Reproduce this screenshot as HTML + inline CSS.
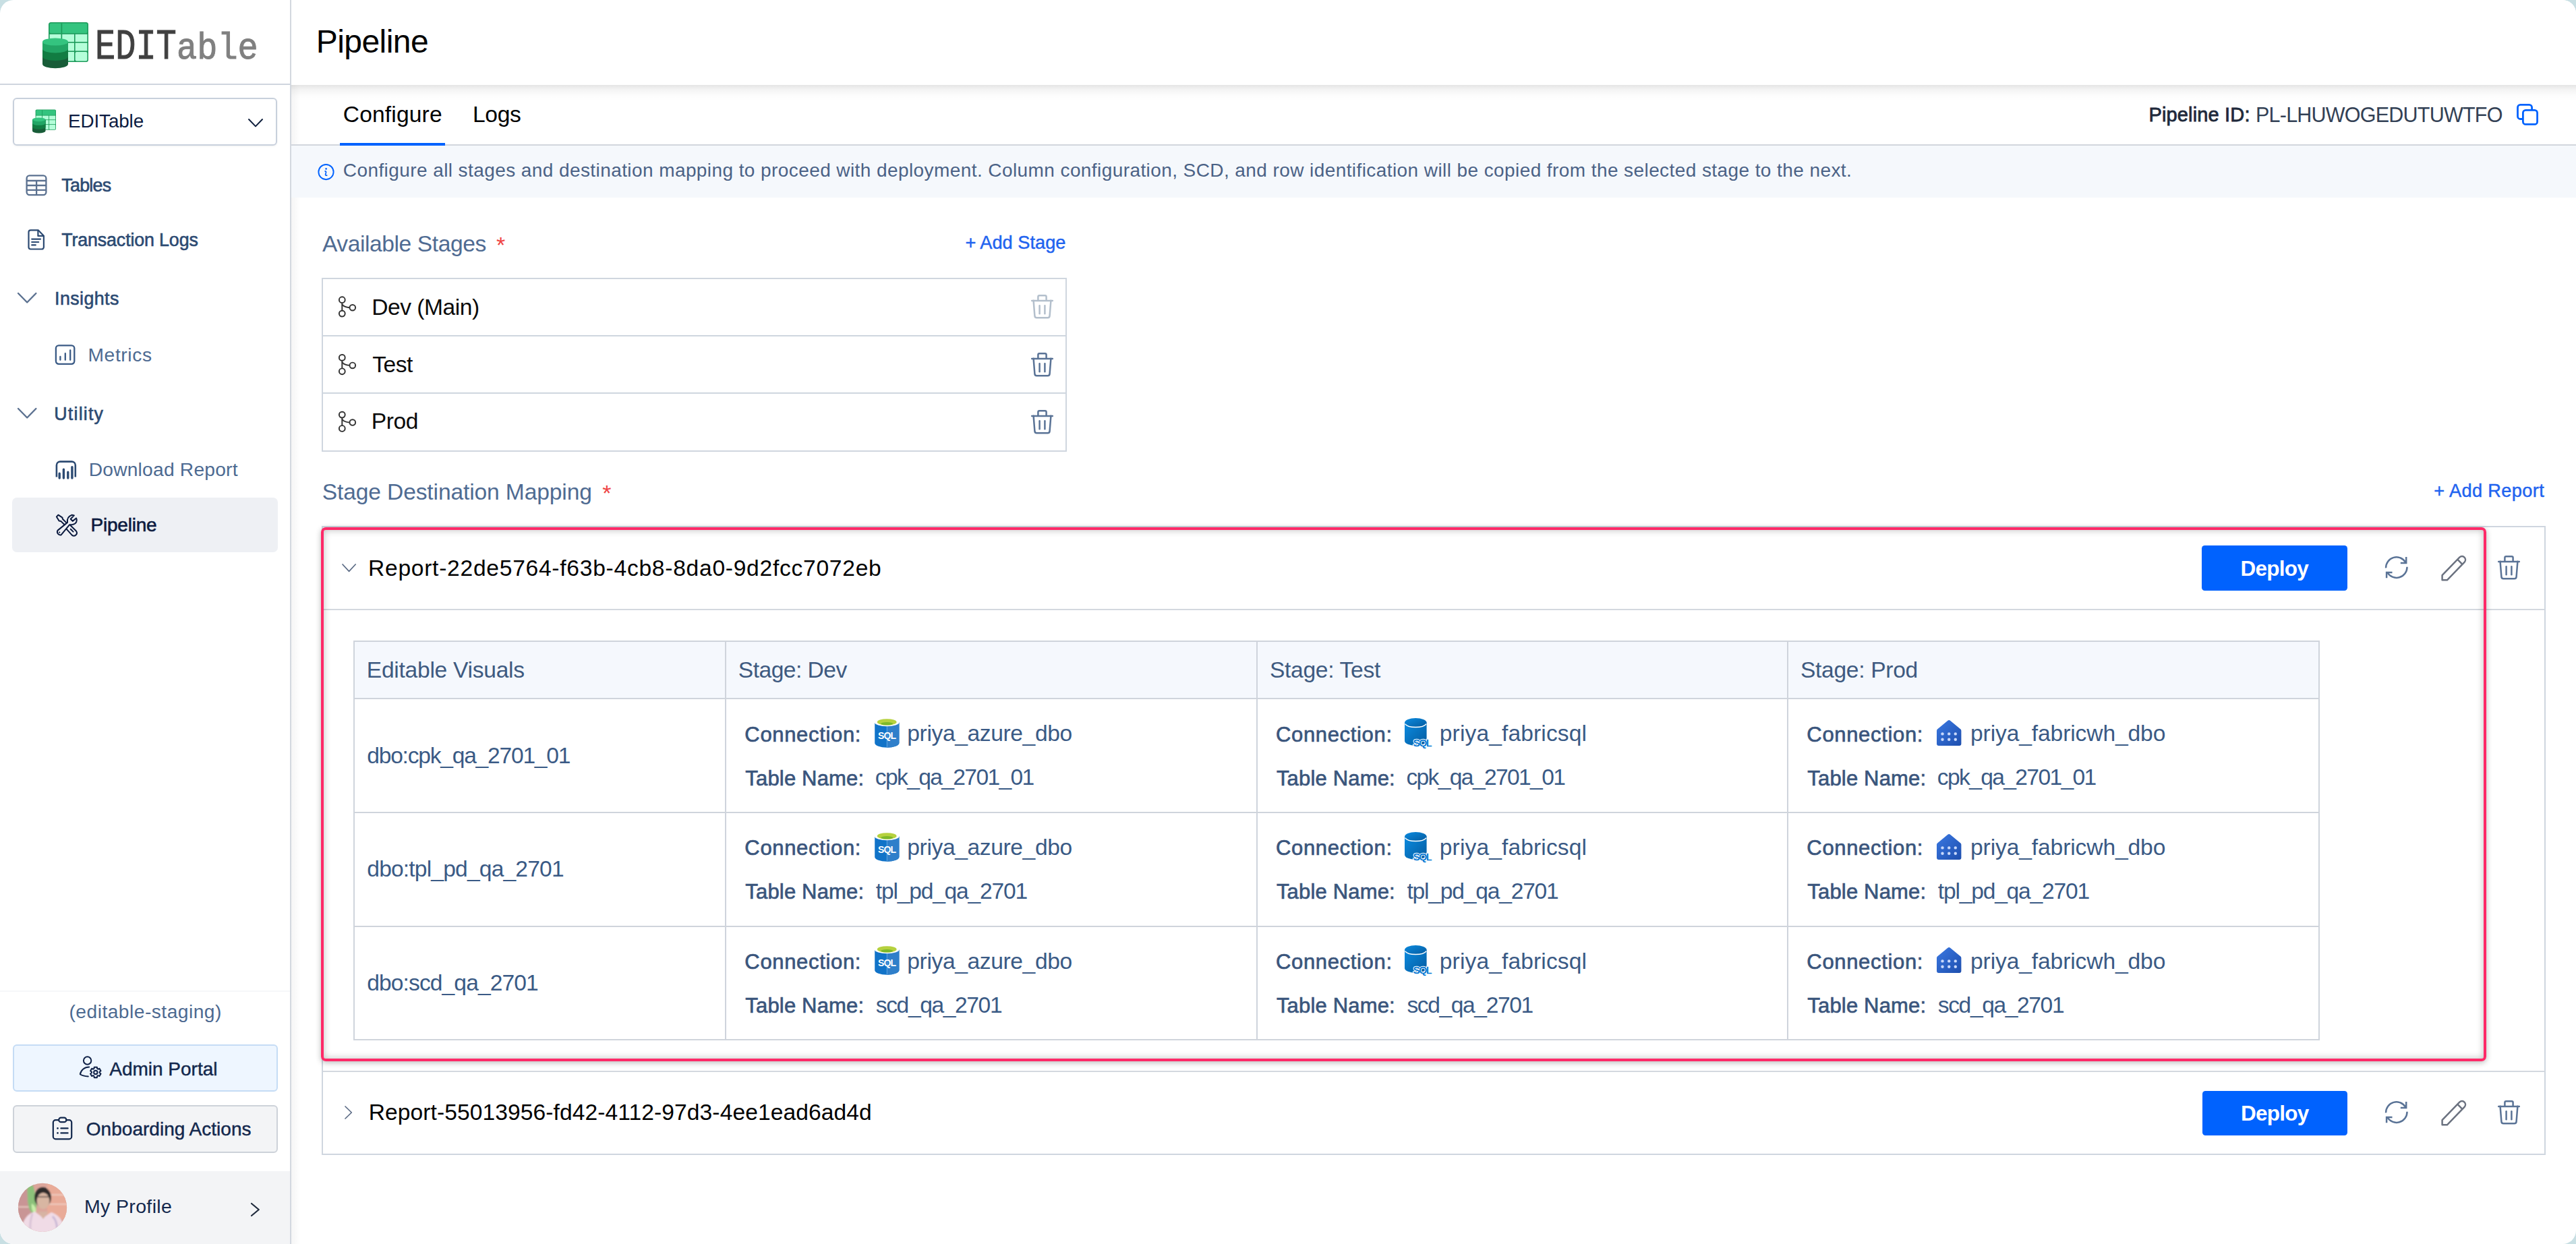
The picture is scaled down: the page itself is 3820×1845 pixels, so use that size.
<!DOCTYPE html>
<html><head><meta charset="utf-8"><title>Pipeline</title>
<style>
html,body{margin:0;padding:0;}
body{width:3820px;height:1845px;overflow:hidden;background:#c8dfe3;position:relative;font-family:"Liberation Sans",sans-serif;}
.win{position:absolute;left:0;top:0;width:3820px;height:1845px;background:#fff;border-radius:20px;overflow:hidden;}
.b{position:absolute;}
.t{position:absolute;white-space:nowrap;font-family:"Liberation Sans",sans-serif;z-index:4;}
.ic{position:absolute;overflow:visible;z-index:4;}
</style></head><body><div class="win">
<div class="b" style="left:430px;top:0px;width:2px;height:1845px;background:#d3d8df"></div>
<div class="b" style="left:432px;top:0px;width:14px;height:1845px;background:linear-gradient(90deg,rgba(0,0,0,0.04),rgba(0,0,0,0))"></div>
<div class="b" style="left:0px;top:124px;width:430px;height:2px;background:#cfd5de"></div>
<svg class="ic" style="left:60px;top:30px;width:74px;height:74px;" viewBox="60 30 74 74"><g transform="translate(63 33) scale(1) translate(-63 -33)">
<rect x="72" y="33" width="59" height="59" rx="3.5" fill="#1c9a5a"/>
<rect x="73.6" y="34.6" width="55.8" height="14.6" rx="2" fill="#34c47f"/>
<rect x="73.6" y="50.8" width="16.9" height="11.2" fill="#b4fed9"/>
<rect x="92.2" y="50.8" width="17.8" height="11.2" fill="#b4fed9"/>
<rect x="111.6" y="50.8" width="17.8" height="11.2" fill="#b4fed9"/>
<rect x="73.6" y="63.6" width="16.9" height="11.8" fill="#b4fed9"/>
<rect x="92.2" y="63.6" width="17.8" height="11.8" fill="#b4fed9"/>
<rect x="111.6" y="63.6" width="17.8" height="11.8" fill="#b4fed9"/>
<rect x="73.6" y="77" width="16.9" height="13.4" rx="1" fill="#b4fed9"/>
<rect x="92.2" y="77" width="17.8" height="13.4" fill="#b4fed9"/>
<rect x="111.6" y="77" width="17.8" height="13.4" rx="2" fill="#b4fed9"/>
<rect x="90.6" y="34.6" width="1.6" height="15" fill="#1c9a5a"/>
<path d="M63 62 v33 a19 6.2 0 0 0 38 0 v-33 z" fill="#185c38"/>
<path d="M63 62 v22 a19 6 0 0 0 38 0 v-22 z" fill="#117c42"/>
<path d="M63 62 v10.5 a19 6 0 0 0 38 0 v-10.5 z" fill="#22a565"/>
<ellipse cx="82" cy="62" rx="19" ry="5.6" fill="#34c47f"/>
</g></svg>
<div class="b" style="left:18.5px;top:144.5px;width:392.3px;height:71.0px;border:2px solid #c8d0dc;border-radius:6px;box-sizing:border-box;box-shadow:0 1px 3px rgba(0,0,0,0.06)"></div>
<svg class="ic" style="left:46px;top:160px;width:40px;height:40px;" viewBox="46 160 40 40"><g transform="translate(48 162.4) scale(0.5147058823529411) translate(-63 -33)">
<rect x="72" y="33" width="59" height="59" rx="3.5" fill="#1c9a5a"/>
<rect x="73.6" y="34.6" width="55.8" height="14.6" rx="2" fill="#34c47f"/>
<rect x="73.6" y="50.8" width="16.9" height="11.2" fill="#b4fed9"/>
<rect x="92.2" y="50.8" width="17.8" height="11.2" fill="#b4fed9"/>
<rect x="111.6" y="50.8" width="17.8" height="11.2" fill="#b4fed9"/>
<rect x="73.6" y="63.6" width="16.9" height="11.8" fill="#b4fed9"/>
<rect x="92.2" y="63.6" width="17.8" height="11.8" fill="#b4fed9"/>
<rect x="111.6" y="63.6" width="17.8" height="11.8" fill="#b4fed9"/>
<rect x="73.6" y="77" width="16.9" height="13.4" rx="1" fill="#b4fed9"/>
<rect x="92.2" y="77" width="17.8" height="13.4" fill="#b4fed9"/>
<rect x="111.6" y="77" width="17.8" height="13.4" rx="2" fill="#b4fed9"/>
<rect x="90.6" y="34.6" width="1.6" height="15" fill="#1c9a5a"/>
<path d="M63 62 v33 a19 6.2 0 0 0 38 0 v-33 z" fill="#185c38"/>
<path d="M63 62 v22 a19 6 0 0 0 38 0 v-22 z" fill="#117c42"/>
<path d="M63 62 v10.5 a19 6 0 0 0 38 0 v-10.5 z" fill="#22a565"/>
<ellipse cx="82" cy="62" rx="19" ry="5.6" fill="#34c47f"/>
</g></svg>
<svg class="ic" style="left:365.6px;top:174.4px;width:26.0px;height:16.400000000000006px;" viewBox="365.6 174.4 26.0 16.400000000000006"><path d="M368.6 177.4 L378.6 187.8 L388.6 177.4" fill="none" stroke="#0f1f3d" stroke-width="2.0" stroke-linecap="round" stroke-linejoin="round"/></svg>
<svg class="ic" style="left:36px;top:257px;width:36px;height:36px;" viewBox="36 257 36 36"><g fill="none" stroke="#5b7190" stroke-width="2.3"><rect x="39.6" y="260.4" width="28.8" height="28.8" rx="4.2"/>
<path d="M39.6 268 H68.4 M39.6 275 H68.4 M39.6 281.8 H68.4 M54.1 268 V289.2"/></g></svg>
<svg class="ic" style="left:39px;top:338px;width:30px;height:35px;" viewBox="39 338 30 35"><g fill="none" stroke="#2c4a72" stroke-width="2.2" stroke-linejoin="round">
<path d="M45.5 341.3 H56.6 L64.9 349.8 V366.5 a3 3 0 0 1 -3 3 H45.5 a3 3 0 0 1 -3 -3 V344.3 a3 3 0 0 1 3 -3 Z"/>
<path d="M56.4 341.5 V349.9 H64.8"/><path d="M47.2 354.6 H60 M47.2 359 H57.2 M47.2 363.4 H52.8" stroke-linecap="round"/></g></svg>
<svg class="ic" style="left:24.2px;top:431.5px;width:32.400000000000006px;height:19.5px;" viewBox="24.2 431.5 32.400000000000006 19.5"><path d="M27.2 434.5 L40.4 448 L53.6 434.5" fill="none" stroke="#5b7190" stroke-width="2.4" stroke-linecap="round" stroke-linejoin="round"/></svg>
<svg class="ic" style="left:80px;top:509px;width:34px;height:34px;" viewBox="80 509 34 34"><g fill="none" stroke="#3a5a85" stroke-width="2.3" stroke-linecap="round"><rect x="82.9" y="512.4" width="27.4" height="27.4" rx="4.2"/>
<path d="M89.4 529 V533.8 M96.8 524.2 V533.8 M104.2 519.3 V533.8"/></g></svg>
<svg class="ic" style="left:24.2px;top:602.5px;width:32.400000000000006px;height:19.5px;" viewBox="24.2 602.5 32.400000000000006 19.5"><path d="M27.2 605.5 L40.4 619 L53.6 605.5" fill="none" stroke="#5b7190" stroke-width="2.4" stroke-linecap="round" stroke-linejoin="round"/></svg>
<svg class="ic" style="left:80px;top:681px;width:36px;height:32px;" viewBox="80 681 36 32"><g fill="none" stroke="#2c4a72" stroke-linecap="round">
<path d="M83.9 707.5 V690 a5.4 5.4 0 0 1 5.4 -5.4 H106.4 a5.4 5.4 0 0 1 5.4 5.4 V707.5" stroke-width="2.6" stroke-linecap="butt"/>
<path d="M88.2 702.2 V709 M94.4 696.2 V709 M100.8 700.2 V709 M106.9 692.6 V709" stroke-width="3.4"/></g></svg>
<div class="b" style="left:18px;top:738px;width:394px;height:80.5px;background:#eef0f4;border-radius:7px"></div>
<svg class="ic" style="left:81px;top:762px;width:36px;height:35px;" viewBox="81 762 36 35"><g fill="none" stroke="#0b1a3e" stroke-width="2.0" stroke-linejoin="round" stroke-linecap="round">
<path d="M90.2 772.9 L87.6 772.4 L83.9 766.4 L86.4 763.7 L92.4 767.6 L92.9 769.7 L98.3 775.1 M90.2 772.9 L95.7 778.3"/>
<path d="M104.3 779 L113.1 787.7 A4.4 4.4 0 0 1 106.7 793.6 L98.6 784.7"/>
<path d="M104.7 784.7 L108.6 788.6"/>
<path d="M100 774.9 C99.3 770 101.5 765.5 106.7 763.7 L109.9 764.4 L104.7 769.7 L107.7 772.9 L113.1 768.5 C114.9 772 113.6 776.8 107.7 777.9 L103 778.3 L90.8 793.2 A4.5 4.5 0 0 1 85.6 786.6 Z"/>
</g><circle cx="88.2" cy="789.6" r="1.1" fill="#0b1a3e"/></svg>
<div class="b" style="left:0px;top:1469px;width:430px;height:2px;background:#f6f7f9"></div>
<div class="b" style="left:18.5px;top:1548.5px;width:393.0px;height:70.5px;background:#eef6ff;border:2px solid #c5dcf5;border-radius:6px;box-sizing:border-box"></div>
<svg class="ic" style="left:115px;top:1564px;width:38px;height:38px;" viewBox="115 1564 38 38"><g fill="none" stroke="#0f2147" stroke-width="2" stroke-linecap="round" stroke-linejoin="round">
<circle cx="129.6" cy="1573" r="5.7"/><path d="M132.2 1582.6 C125.5 1582.6 120 1587 118.8 1593.3 C122 1595.6 126.5 1596.3 130.8 1596.5"/>
<path d="M139.39 1585.01 L139.74 1582.67 L143.86 1582.67 L144.21 1585.01 L145.26 1585.62 L147.47 1584.75 L149.52 1588.32 L147.67 1589.79 L147.67 1591.01 L149.52 1592.48 L147.47 1596.05 L145.26 1595.18 L144.21 1595.79 L143.86 1598.13 L139.74 1598.13 L139.39 1595.79 L138.34 1595.18 L136.13 1596.05 L134.08 1592.48 L135.93 1591.01 L135.93 1589.79 L134.08 1588.32 L136.13 1584.75 L138.34 1585.62 Z"/><circle cx="141.8" cy="1590.4" r="2.7"/></g></svg>
<div class="b" style="left:18.5px;top:1638.5px;width:393.0px;height:71.0px;background:#f3f4f6;border:2px solid #cdd2d9;border-radius:6px;box-sizing:border-box"></div>
<svg class="ic" style="left:75px;top:1654px;width:35px;height:39px;" viewBox="75 1654 35 39"><g fill="none" stroke="#13284d" stroke-width="2.2" stroke-linecap="round">
<path d="M86.6 1661.2 H82.4 a3.6 3.6 0 0 0 -3.6 3.6 V1685.8 a3.6 3.6 0 0 0 3.6 3.6 H102.6 a3.6 3.6 0 0 0 3.6 -3.6 V1664.8 a3.6 3.6 0 0 0 -3.6 -3.6 H98.4"/>
<rect x="87.2" y="1657.6" width="11.2" height="6.6" rx="3.3"/>
<path d="M90.4 1673.4 H100.6 M90.4 1680.4 H100.6"/></g>
<g fill="#13284d"><circle cx="85.5" cy="1673.4" r="1.3"/><circle cx="85.5" cy="1680.4" r="1.3"/></g></svg>
<div class="b" style="left:0px;top:1737px;width:430px;height:108px;background:#f3f4f6"></div>
<svg class="ic" style="left:26px;top:1754px;width:74px;height:74px;" viewBox="26 1754 74 74"><defs><clipPath id="av"><circle cx="63" cy="1790.9" r="36.1"/></clipPath>
<filter id="avb" x="-20%" y="-20%" width="140%" height="140%"><feGaussianBlur stdDeviation="1.3"/></filter></defs>
<g clip-path="url(#av)"><rect x="20" y="1748" width="86" height="86" fill="#dba59b"/>
<g filter="url(#avb)">
<rect x="20" y="1748" width="30" height="86" fill="#c99595"/>
<rect x="70" y="1748" width="36" height="60" fill="#e9ab98"/>
<path d="M72 1772 H104 M72 1786 H104 M22 1790 H44" stroke="#f0d6cc" stroke-width="1.6"/>
<path d="M40 1750 C46 1752 52 1760 52 1775 C54 1786 56 1792 50 1800 C44 1798 42 1790 41 1780 Z" fill="#8cc17a"/>
<path d="M47 1785 C52 1788 56 1794 52 1800 C48 1798 46 1792 47 1785 Z" fill="#c9efaa"/>
<ellipse cx="63.5" cy="1776" rx="12.5" ry="15" fill="#2e2a2c"/>
<ellipse cx="64" cy="1781" rx="9.5" ry="12" fill="#d8b6a2"/>
<path d="M55 1775 H73" stroke="#5a4b48" stroke-width="1.6"/>
<path d="M30 1834 C32 1810 40 1800 52 1797 L64 1806 L76 1798 C88 1802 96 1812 98 1834 Z" fill="#f0dbe6"/>
<path d="M56 1797 L64 1808 L72 1797 Z" fill="#d7b4a3"/>
<path d="M78 1804 C84 1810 86 1820 84 1834" stroke="#c9b8d6" stroke-width="3" fill="none"/>
<path d="M48 1800 C44 1812 44 1822 46 1834" stroke="#d9c3d6" stroke-width="3" fill="none"/>
</g></g></svg>
<svg class="ic" style="left:370.2px;top:1782.2px;width:16.80000000000001px;height:24.0px;" viewBox="370.2 1782.2 16.80000000000001 24.0"><path d="M373.2 1785.2 L384 1794.2 L373.2 1803.2" fill="none" stroke="#1e293b" stroke-width="2.2" stroke-linecap="round" stroke-linejoin="round"/></svg>
<div class="b" style="left:432px;top:0px;width:3388px;height:126px;background:#fff;z-index:2"></div>
<div class="b" style="left:432px;top:126px;width:3388px;height:24px;background:linear-gradient(180deg,rgba(0,0,0,0.10),rgba(0,0,0,0.045) 30%,rgba(0,0,0,0.012) 65%,rgba(0,0,0,0));z-index:2"></div>
<div class="b" style="left:432px;top:214px;width:3388px;height:2px;background:#d2d6dd"></div>
<div class="b" style="left:504px;top:212px;width:156px;height:4px;background:#0062fe"></div>
<svg class="ic" style="left:3729px;top:151px;width:38px;height:37px;" viewBox="3729 151 38 37"><g fill="none" stroke="#0062fe" stroke-width="2.8"><path d="M3741 176.5 H3737.5 a4 4 0 0 1 -4 -4 V159.4 a4 4 0 0 1 4 -4 H3750.6 a4 4 0 0 1 4 4 V163"/>
<rect x="3741.4" y="163.4" width="21.2" height="21" rx="4" fill="#fff"/></g></svg>
<div class="b" style="left:432px;top:216px;width:3388px;height:77px;background:#f5f8fc"></div>
<svg class="ic" style="left:469px;top:241px;width:28px;height:28px;" viewBox="469 241 28 28"><circle cx="483.5" cy="255.1" r="11.1" fill="none" stroke="#0062fe" stroke-width="1.9"/><circle cx="483.6" cy="250.4" r="1.3" fill="#0062fe"/><path d="M482.1 253.9 Q484 254 483.3 256.4 L482.7 258.4 Q482.3 260.5 484.7 260.2" fill="none" stroke="#0062fe" stroke-width="1.7" stroke-linecap="round"/></svg>
<div class="t" style="left:736px;top:345.7px;font-size:34px;line-height:34px;color:#ef4444">*</div>
<div class="b" style="left:477px;top:412px;width:1105px;height:257.5px;border:2px solid #cfd6df;box-sizing:border-box"></div>
<div class="b" style="left:479px;top:497px;width:1101px;height:2px;background:#cfd6df"></div>
<div class="b" style="left:479px;top:582px;width:1101px;height:2px;background:#cfd6df"></div>
<svg class="ic" style="left:499px;top:437px;width:32px;height:36px;" viewBox="499 437 32 36"><g fill="none" stroke="#333" stroke-width="1.95">
<circle cx="507.3" cy="444.7" r="4.4"/><circle cx="507.3" cy="465.1" r="4.4"/><circle cx="522.8" cy="456.2" r="4.3"/>
<path d="M507.3 448.90000000000003 V460.8"/><path d="M507.3 451.3 C509 454.3 512 455.8 518.6 456.2"/></g></svg>
<svg class="ic" style="left:499px;top:523px;width:32px;height:36px;" viewBox="499 523 32 36"><g fill="none" stroke="#333" stroke-width="1.95">
<circle cx="507.3" cy="530.4" r="4.4"/><circle cx="507.3" cy="550.8" r="4.4"/><circle cx="522.8" cy="541.9" r="4.3"/>
<path d="M507.3 534.6 V546.5"/><path d="M507.3 537 C509 540 512 541.5 518.6 541.9"/></g></svg>
<svg class="ic" style="left:499px;top:607px;width:32px;height:36px;" viewBox="499 607 32 36"><g fill="none" stroke="#333" stroke-width="1.95">
<circle cx="507.3" cy="615.1" r="4.4"/><circle cx="507.3" cy="635.5" r="4.4"/><circle cx="522.8" cy="626.6" r="4.3"/>
<path d="M507.3 619.3000000000001 V631.2"/><path d="M507.3 621.7 C509 624.7 512 626.2 518.6 626.6"/></g></svg>
<svg class="ic" style="left:1527.2px;top:435.2px;width:38.0px;height:40.0px;" viewBox="1527.2 435.2 38.0 40.0"><g fill="none" stroke="#b3bfcc" stroke-width="2.5" stroke-linecap="round" stroke-linejoin="round" transform="translate(1529.2 437.2)">
<path d="M1.2 9 H31.8"/><path d="M10.4 8 V3.2 a2 2 0 0 1 2 -2 H20.6 a2 2 0 0 1 2 2 V8"/>
<path d="M3.6 8.8 L5.4 31.4 a3 3 0 0 0 3 2.9 H24.6 a3 3 0 0 0 3 -2.9 L29.4 8.8"/>
<path d="M12.6 16.3 V28.2"/><path d="M20.4 16.3 V28.2"/></g></svg>
<svg class="ic" style="left:1527.2px;top:520.9px;width:38.0px;height:40.0px;" viewBox="1527.2 520.9 38.0 40.0"><g fill="none" stroke="#5a7396" stroke-width="2.5" stroke-linecap="round" stroke-linejoin="round" transform="translate(1529.2 522.9)">
<path d="M1.2 9 H31.8"/><path d="M10.4 8 V3.2 a2 2 0 0 1 2 -2 H20.6 a2 2 0 0 1 2 2 V8"/>
<path d="M3.6 8.8 L5.4 31.4 a3 3 0 0 0 3 2.9 H24.6 a3 3 0 0 0 3 -2.9 L29.4 8.8"/>
<path d="M12.6 16.3 V28.2"/><path d="M20.4 16.3 V28.2"/></g></svg>
<svg class="ic" style="left:1527.2px;top:605.6px;width:38.0px;height:40.0px;" viewBox="1527.2 605.6 38.0 40.0"><g fill="none" stroke="#5a7396" stroke-width="2.5" stroke-linecap="round" stroke-linejoin="round" transform="translate(1529.2 607.6)">
<path d="M1.2 9 H31.8"/><path d="M10.4 8 V3.2 a2 2 0 0 1 2 -2 H20.6 a2 2 0 0 1 2 2 V8"/>
<path d="M3.6 8.8 L5.4 31.4 a3 3 0 0 0 3 2.9 H24.6 a3 3 0 0 0 3 -2.9 L29.4 8.8"/>
<path d="M12.6 16.3 V28.2"/><path d="M20.4 16.3 V28.2"/></g></svg>
<div class="t" style="left:893.2px;top:714.3px;font-size:34px;line-height:34px;color:#ef4444">*</div>
<div class="b" style="left:477px;top:780px;width:3298px;height:933px;border:2px solid #cfd6df;box-sizing:border-box"></div>
<div class="b" style="left:479px;top:903px;width:3294px;height:2px;background:#d3d8df"></div>
<div class="b" style="left:479px;top:1588px;width:3294px;height:2px;background:#d3d8df"></div>
<div class="b" style="left:3265px;top:809px;width:216px;height:67px;background:#0062fe;border-radius:4.5px"></div>
<div class="b" style="left:3265.5px;top:1617.5px;width:215.0px;height:66.5px;background:#0062fe;border-radius:4.5px"></div>
<svg class="ic" style="left:3535.2px;top:823.2px;width:39.0px;height:39.0px;" viewBox="3535.2 823.2 39.0 39.0"><g fill="none" stroke="#5a7396" stroke-width="2.5" stroke-linecap="butt" transform="translate(3537.2 825.2)">
<path d="M1.1 17.4 A15.7 15.7 0 0 1 30.4 9.2"/><path d="M31.2 1 V10 H22.8"/>
<path d="M32.5 15.8 A15.7 15.7 0 0 1 3.2 24"/><path d="M2.1 32.3 V24 H10.5"/></g></svg>
<svg class="ic" style="left:3618.7px;top:821.8px;width:41.0px;height:41.0px;" viewBox="3618.7 821.8 41.0 41.0"><g fill="none" stroke="#6b7280" stroke-width="2.5" stroke-linejoin="round" transform="translate(3620.7 823.8)">
<path d="M0.6 29.1 L26.5 2.4 A5.1 5.1 0 0 1 33.7 9.6 L7.9 36.3 H0.6 Z"/><path d="M23.2 5.7 L30.4 12.9"/></g></svg>
<svg class="ic" style="left:3702.2px;top:821.8px;width:38.0px;height:40.0px;" viewBox="3702.2 821.8 38.0 40.0"><g fill="none" stroke="#5a7396" stroke-width="2.5" stroke-linecap="round" stroke-linejoin="round" transform="translate(3704.2 823.8)">
<path d="M1.2 9 H31.8"/><path d="M10.4 8 V3.2 a2 2 0 0 1 2 -2 H20.6 a2 2 0 0 1 2 2 V8"/>
<path d="M3.6 8.8 L5.4 31.4 a3 3 0 0 0 3 2.9 H24.6 a3 3 0 0 0 3 -2.9 L29.4 8.8"/>
<path d="M12.6 16.3 V28.2"/><path d="M20.4 16.3 V28.2"/></g></svg>
<svg class="ic" style="left:3535.2px;top:1631.2px;width:39.0px;height:39.0px;" viewBox="3535.2 1631.2 39.0 39.0"><g fill="none" stroke="#5a7396" stroke-width="2.5" stroke-linecap="butt" transform="translate(3537.2 1633.2)">
<path d="M1.1 17.4 A15.7 15.7 0 0 1 30.4 9.2"/><path d="M31.2 1 V10 H22.8"/>
<path d="M32.5 15.8 A15.7 15.7 0 0 1 3.2 24"/><path d="M2.1 32.3 V24 H10.5"/></g></svg>
<svg class="ic" style="left:3618.7px;top:1629.8px;width:41.0px;height:41.0px;" viewBox="3618.7 1629.8 41.0 41.0"><g fill="none" stroke="#6b7280" stroke-width="2.5" stroke-linejoin="round" transform="translate(3620.7 1631.8)">
<path d="M0.6 29.1 L26.5 2.4 A5.1 5.1 0 0 1 33.7 9.6 L7.9 36.3 H0.6 Z"/><path d="M23.2 5.7 L30.4 12.9"/></g></svg>
<svg class="ic" style="left:3702.2px;top:1629.8px;width:38.0px;height:40.0px;" viewBox="3702.2 1629.8 38.0 40.0"><g fill="none" stroke="#5a7396" stroke-width="2.5" stroke-linecap="round" stroke-linejoin="round" transform="translate(3704.2 1631.8)">
<path d="M1.2 9 H31.8"/><path d="M10.4 8 V3.2 a2 2 0 0 1 2 -2 H20.6 a2 2 0 0 1 2 2 V8"/>
<path d="M3.6 8.8 L5.4 31.4 a3 3 0 0 0 3 2.9 H24.6 a3 3 0 0 0 3 -2.9 L29.4 8.8"/>
<path d="M12.6 16.3 V28.2"/><path d="M20.4 16.3 V28.2"/></g></svg>
<svg class="ic" style="left:504.6px;top:834.4px;width:25.199999999999932px;height:16.300000000000068px;" viewBox="504.6 834.4 25.199999999999932 16.300000000000068"><path d="M507.6 837.4 L517.2 847.7 L526.8 837.4" fill="none" stroke="#5b6b85" stroke-width="1.7" stroke-linecap="round" stroke-linejoin="round"/></svg>
<svg class="ic" style="left:509.29999999999995px;top:1638px;width:15.300000000000068px;height:24px;" viewBox="509.29999999999995 1638 15.300000000000068 24"><path d="M512.3 1641 L521.6 1650.0 L512.3 1659" fill="none" stroke="#5b6b85" stroke-width="1.7" stroke-linecap="round" stroke-linejoin="round"/></svg>
<div class="b" style="left:524px;top:950px;width:2916px;height:593px;border:2px solid #cfd4dc;box-sizing:border-box;background:#fff"></div>
<div class="b" style="left:526px;top:952px;width:2912px;height:83px;background:#f5f8fd"></div>
<div class="b" style="left:526px;top:1035px;width:2912px;height:2px;background:#cfd4dc"></div>
<div class="b" style="left:526px;top:1204px;width:2912px;height:2px;background:#cfd4dc"></div>
<div class="b" style="left:526px;top:1373px;width:2912px;height:2px;background:#cfd4dc"></div>
<div class="b" style="left:1075px;top:952px;width:2px;height:589px;background:#cfd4dc"></div>
<div class="b" style="left:1863px;top:952px;width:2px;height:589px;background:#cfd4dc"></div>
<div class="b" style="left:2650px;top:952px;width:2px;height:589px;background:#cfd4dc"></div>
<svg class="ic" style="left:1296.1px;top:1064.8px;width:39.0px;height:46.0px;" viewBox="1296.1 1064.8 39.0 46.0"><g transform="translate(1297.1 1065.8)">
<path d="M0.2 5.5 V36 A18 6.8 0 0 0 36.4 36 V5.5 Z" fill="#1173c8"/>
<path d="M18.3 11 V42.8 A18 6.8 0 0 0 36.4 36 V5.5 Z" fill="#2f7fca"/>
<path d="M18.3 11.5 V42.5" stroke="#6aaee6" stroke-width="0.9"/>
<ellipse cx="18.2" cy="5.6" rx="18.2" ry="5.6" fill="#fff"/>
<ellipse cx="18.2" cy="4.9" rx="14.4" ry="4.7" fill="#b6d13e"/>
<ellipse cx="18.2" cy="7.3" rx="9" ry="2.3" fill="#7db82a"/>
<text x="18.1" y="29.6" text-anchor="middle" font-family="Liberation Sans" font-weight="700" font-size="14" letter-spacing="-0.9" fill="#fff">SQL</text>
</g></svg>
<svg class="ic" style="left:2081.3px;top:1063px;width:44.0px;height:48px;" viewBox="2081.3 1063 44.0 48"><defs><linearGradient id="fg0" x1="0" y1="0" x2="1" y2="1"><stop offset="0" stop-color="#0b8be0"/><stop offset="1" stop-color="#045b9f"/></linearGradient></defs>
<g transform="translate(2083.3 1065)">
<path d="M0 6.8 V34 A16.3 6.8 0 0 0 32.6 34 V6.8 Z" fill="url(#fg0)"/>
<ellipse cx="16.3" cy="6.8" rx="16.3" ry="6.8" fill="url(#fg0)"/>
<path d="M0.6 8.6 A16.3 6.8 0 0 0 32 8.6" fill="none" stroke="#fff" stroke-width="1.5"/>
<text x="25.9" y="41.9" text-anchor="middle" font-family="Liberation Sans" font-weight="400" font-size="14.8" letter-spacing="-1.1" fill="#0a7ad4" stroke="#fff" stroke-width="2.6" paint-order="stroke">SQL</text><text x="25.9" y="41.9" text-anchor="middle" font-family="Liberation Sans" font-weight="400" font-size="14.8" letter-spacing="-1.1" fill="#0a7ad4" stroke="#0a7ad4" stroke-width="0.5">SQL</text>
</g></svg>
<svg class="ic" style="left:2871.3px;top:1067px;width:39.0px;height:41px;" viewBox="2871.3 1067 39.0 41"><defs><linearGradient id="wg0" x1="0" y1="0" x2="1" y2="1"><stop offset="0" stop-color="#3a78e2"/><stop offset="1" stop-color="#1e4fae"/></linearGradient></defs>
<g transform="translate(2872.3 1068)">
<path d="M16.4 0.8 a2.6 2.6 0 0 1 3.6 0 L35.4 13.6 a3 3 0 0 1 1 2.3 V34.9 a3 3 0 0 1 -3 3 H3 a3 3 0 0 1 -3 -3 V15.9 a3 3 0 0 1 1 -2.3 Z" fill="url(#wg0)"/>
<circle cx="8.5" cy="20.4" r="2.2" fill="#c9d9fb"/><circle cx="8.5" cy="28.7" r="2.2" fill="#c9d9fb"/><circle cx="18.2" cy="20.4" r="2.2" fill="#c9d9fb"/><circle cx="18.2" cy="28.7" r="2.2" fill="#c9d9fb"/><circle cx="27.8" cy="20.4" r="2.2" fill="#c9d9fb"/><circle cx="27.8" cy="28.7" r="2.2" fill="#c9d9fb"/></g></svg>
<svg class="ic" style="left:1296.1px;top:1233.5px;width:39.0px;height:46.0px;" viewBox="1296.1 1233.5 39.0 46.0"><g transform="translate(1297.1 1234.5)">
<path d="M0.2 5.5 V36 A18 6.8 0 0 0 36.4 36 V5.5 Z" fill="#1173c8"/>
<path d="M18.3 11 V42.8 A18 6.8 0 0 0 36.4 36 V5.5 Z" fill="#2f7fca"/>
<path d="M18.3 11.5 V42.5" stroke="#6aaee6" stroke-width="0.9"/>
<ellipse cx="18.2" cy="5.6" rx="18.2" ry="5.6" fill="#fff"/>
<ellipse cx="18.2" cy="4.9" rx="14.4" ry="4.7" fill="#b6d13e"/>
<ellipse cx="18.2" cy="7.3" rx="9" ry="2.3" fill="#7db82a"/>
<text x="18.1" y="29.6" text-anchor="middle" font-family="Liberation Sans" font-weight="700" font-size="14" letter-spacing="-0.9" fill="#fff">SQL</text>
</g></svg>
<svg class="ic" style="left:2081.3px;top:1231.7px;width:44.0px;height:48.0px;" viewBox="2081.3 1231.7 44.0 48.0"><defs><linearGradient id="fg1" x1="0" y1="0" x2="1" y2="1"><stop offset="0" stop-color="#0b8be0"/><stop offset="1" stop-color="#045b9f"/></linearGradient></defs>
<g transform="translate(2083.3 1233.7)">
<path d="M0 6.8 V34 A16.3 6.8 0 0 0 32.6 34 V6.8 Z" fill="url(#fg1)"/>
<ellipse cx="16.3" cy="6.8" rx="16.3" ry="6.8" fill="url(#fg1)"/>
<path d="M0.6 8.6 A16.3 6.8 0 0 0 32 8.6" fill="none" stroke="#fff" stroke-width="1.5"/>
<text x="25.9" y="41.9" text-anchor="middle" font-family="Liberation Sans" font-weight="400" font-size="14.8" letter-spacing="-1.1" fill="#0a7ad4" stroke="#fff" stroke-width="2.6" paint-order="stroke">SQL</text><text x="25.9" y="41.9" text-anchor="middle" font-family="Liberation Sans" font-weight="400" font-size="14.8" letter-spacing="-1.1" fill="#0a7ad4" stroke="#0a7ad4" stroke-width="0.5">SQL</text>
</g></svg>
<svg class="ic" style="left:2871.3px;top:1235.7px;width:39.0px;height:41.0px;" viewBox="2871.3 1235.7 39.0 41.0"><defs><linearGradient id="wg1" x1="0" y1="0" x2="1" y2="1"><stop offset="0" stop-color="#3a78e2"/><stop offset="1" stop-color="#1e4fae"/></linearGradient></defs>
<g transform="translate(2872.3 1236.7)">
<path d="M16.4 0.8 a2.6 2.6 0 0 1 3.6 0 L35.4 13.6 a3 3 0 0 1 1 2.3 V34.9 a3 3 0 0 1 -3 3 H3 a3 3 0 0 1 -3 -3 V15.9 a3 3 0 0 1 1 -2.3 Z" fill="url(#wg1)"/>
<circle cx="8.5" cy="20.4" r="2.2" fill="#c9d9fb"/><circle cx="8.5" cy="28.7" r="2.2" fill="#c9d9fb"/><circle cx="18.2" cy="20.4" r="2.2" fill="#c9d9fb"/><circle cx="18.2" cy="28.7" r="2.2" fill="#c9d9fb"/><circle cx="27.8" cy="20.4" r="2.2" fill="#c9d9fb"/><circle cx="27.8" cy="28.7" r="2.2" fill="#c9d9fb"/></g></svg>
<svg class="ic" style="left:1296.1px;top:1402.1999999999998px;width:39.0px;height:46.0px;" viewBox="1296.1 1402.1999999999998 39.0 46.0"><g transform="translate(1297.1 1403.1999999999998)">
<path d="M0.2 5.5 V36 A18 6.8 0 0 0 36.4 36 V5.5 Z" fill="#1173c8"/>
<path d="M18.3 11 V42.8 A18 6.8 0 0 0 36.4 36 V5.5 Z" fill="#2f7fca"/>
<path d="M18.3 11.5 V42.5" stroke="#6aaee6" stroke-width="0.9"/>
<ellipse cx="18.2" cy="5.6" rx="18.2" ry="5.6" fill="#fff"/>
<ellipse cx="18.2" cy="4.9" rx="14.4" ry="4.7" fill="#b6d13e"/>
<ellipse cx="18.2" cy="7.3" rx="9" ry="2.3" fill="#7db82a"/>
<text x="18.1" y="29.6" text-anchor="middle" font-family="Liberation Sans" font-weight="700" font-size="14" letter-spacing="-0.9" fill="#fff">SQL</text>
</g></svg>
<svg class="ic" style="left:2081.3px;top:1400.4px;width:44.0px;height:48.0px;" viewBox="2081.3 1400.4 44.0 48.0"><defs><linearGradient id="fg2" x1="0" y1="0" x2="1" y2="1"><stop offset="0" stop-color="#0b8be0"/><stop offset="1" stop-color="#045b9f"/></linearGradient></defs>
<g transform="translate(2083.3 1402.4)">
<path d="M0 6.8 V34 A16.3 6.8 0 0 0 32.6 34 V6.8 Z" fill="url(#fg2)"/>
<ellipse cx="16.3" cy="6.8" rx="16.3" ry="6.8" fill="url(#fg2)"/>
<path d="M0.6 8.6 A16.3 6.8 0 0 0 32 8.6" fill="none" stroke="#fff" stroke-width="1.5"/>
<text x="25.9" y="41.9" text-anchor="middle" font-family="Liberation Sans" font-weight="400" font-size="14.8" letter-spacing="-1.1" fill="#0a7ad4" stroke="#fff" stroke-width="2.6" paint-order="stroke">SQL</text><text x="25.9" y="41.9" text-anchor="middle" font-family="Liberation Sans" font-weight="400" font-size="14.8" letter-spacing="-1.1" fill="#0a7ad4" stroke="#0a7ad4" stroke-width="0.5">SQL</text>
</g></svg>
<svg class="ic" style="left:2871.3px;top:1404.4px;width:39.0px;height:41.0px;" viewBox="2871.3 1404.4 39.0 41.0"><defs><linearGradient id="wg2" x1="0" y1="0" x2="1" y2="1"><stop offset="0" stop-color="#3a78e2"/><stop offset="1" stop-color="#1e4fae"/></linearGradient></defs>
<g transform="translate(2872.3 1405.4)">
<path d="M16.4 0.8 a2.6 2.6 0 0 1 3.6 0 L35.4 13.6 a3 3 0 0 1 1 2.3 V34.9 a3 3 0 0 1 -3 3 H3 a3 3 0 0 1 -3 -3 V15.9 a3 3 0 0 1 1 -2.3 Z" fill="url(#wg2)"/>
<circle cx="8.5" cy="20.4" r="2.2" fill="#c9d9fb"/><circle cx="8.5" cy="28.7" r="2.2" fill="#c9d9fb"/><circle cx="18.2" cy="20.4" r="2.2" fill="#c9d9fb"/><circle cx="18.2" cy="28.7" r="2.2" fill="#c9d9fb"/><circle cx="27.8" cy="20.4" r="2.2" fill="#c9d9fb"/><circle cx="27.8" cy="28.7" r="2.2" fill="#c9d9fb"/></g></svg>
<div class="b" style="left:475.5px;top:781.5px;width:3211.0px;height:792.0px;border:4px solid #fe2a68;border-radius:7px;box-sizing:border-box;box-shadow:0 2px 9px rgba(0,0,0,0.28), inset 0 0 11px rgba(0,0,0,0.26);z-index:3"></div>
<div class="t" style="left:141px;top:40px;font-family:'Liberation Mono';font-weight:400;font-size:62.5px;line-height:62.5px;color:#404040;-webkit-text-stroke:1.1px #404040;transform:scaleX(0.805);transform-origin:0 0;">EDIT</div>
<div class="t" style="left:261.8px;top:40px;font-family:'Liberation Mono';font-weight:400;font-size:62.5px;line-height:62.5px;color:#808080;-webkit-text-stroke:1.1px #808080;transform:scale(0.805,0.9);transform-origin:0 48px;">able</div>
<div class="t" style="left:468.70px;top:38.26px;font-size:48px;line-height:48px;color:#000;font-weight:400;letter-spacing:-0.542px;">Pipeline</div>
<div class="t" style="left:508.80px;top:153.45px;font-size:33.6px;line-height:33.6px;color:#000;font-weight:400;letter-spacing:0.148px;">Configure</div>
<div class="t" style="left:701.00px;top:153.45px;font-size:33.6px;line-height:33.6px;color:#000;font-weight:400;letter-spacing:-0.341px;">Logs</div>
<div class="t" style="left:3186.40px;top:156.45px;font-size:29px;line-height:29px;color:#1e293b;font-weight:400;letter-spacing:0.160px;-webkit-text-stroke:0.80px #1e293b;">Pipeline ID:</div>
<div class="t" style="left:3345.00px;top:155.18px;font-size:30.5px;line-height:30.5px;color:#334155;font-weight:400;letter-spacing:-0.771px;">PL-LHUWOGEDUTUWTFO</div>
<div class="t" style="left:508.80px;top:239.09px;font-size:28px;line-height:28px;color:#4b6286;font-weight:400;letter-spacing:0.416px;">Configure all stages and destination mapping to proceed with deployment. Column configuration, SCD, and row identification will be copied from the selected stage to the next.</div>
<div class="t" style="left:478.00px;top:344.65px;font-size:33.6px;line-height:33.6px;color:#4f6b92;font-weight:400;letter-spacing:-0.422px;">Available Stages</div>
<div class="t" style="left:1431.42px;top:345.77px;font-size:27.2px;line-height:27.2px;color:#1f63ef;font-weight:400;letter-spacing:0.006px;-webkit-text-stroke:0.45px #1f63ef;">+ Add Stage</div>
<div class="t" style="left:551.20px;top:438.95px;font-size:33.6px;line-height:33.6px;color:#0a0a0a;font-weight:400;letter-spacing:-0.467px;">Dev (Main)</div>
<div class="t" style="left:552.30px;top:523.85px;font-size:33.6px;line-height:33.6px;color:#0a0a0a;font-weight:400;letter-spacing:-0.517px;">Test</div>
<div class="t" style="left:550.80px;top:608.35px;font-size:33.6px;line-height:33.6px;color:#0a0a0a;font-weight:400;letter-spacing:-0.451px;">Prod</div>
<div class="t" style="left:477.70px;top:712.95px;font-size:33.6px;line-height:33.6px;color:#4f6b92;font-weight:400;letter-spacing:-0.126px;">Stage Destination Mapping</div>
<div class="t" style="left:3609.22px;top:714.27px;font-size:27.2px;line-height:27.2px;color:#1f63ef;font-weight:400;letter-spacing:0.377px;-webkit-text-stroke:0.45px #1f63ef;">+ Add Report</div>
<div class="t" style="left:546.00px;top:825.55px;font-size:33.6px;line-height:33.6px;color:#000;font-weight:400;letter-spacing:0.734px;">Report-22de5764-f63b-4cb8-8da0-9d2fcc7072eb</div>
<div class="t" style="left:546.70px;top:1632.55px;font-size:33.6px;line-height:33.6px;color:#000;font-weight:400;letter-spacing:0.084px;">Report-55013956-fd42-4112-97d3-4ee1ead6ad4d</div>
<div class="t" style="left:3322.40px;top:828.03px;font-size:31.5px;line-height:31.5px;color:#fff;font-weight:700;letter-spacing:-0.740px;">Deploy</div>
<div class="t" style="left:3322.90px;top:1635.53px;font-size:31.5px;line-height:31.5px;color:#fff;font-weight:700;letter-spacing:-0.740px;">Deploy</div>
<div class="t" style="left:543.80px;top:976.55px;font-size:33.6px;line-height:33.6px;color:#3e5a80;font-weight:400;letter-spacing:-0.268px;">Editable Visuals</div>
<div class="t" style="left:1094.80px;top:976.55px;font-size:33.6px;line-height:33.6px;color:#3e5a80;font-weight:400;letter-spacing:-0.515px;">Stage: Dev</div>
<div class="t" style="left:1882.90px;top:976.55px;font-size:33.6px;line-height:33.6px;color:#3e5a80;font-weight:400;letter-spacing:-0.296px;">Stage: Test</div>
<div class="t" style="left:2669.90px;top:976.55px;font-size:33.6px;line-height:33.6px;color:#3e5a80;font-weight:400;letter-spacing:-0.296px;">Stage: Prod</div>
<div class="t" style="left:544.30px;top:1103.75px;font-size:33.6px;line-height:33.6px;color:#3a5a85;font-weight:400;letter-spacing:-1.232px;">dbo:cpk_qa_2701_01</div>
<div class="t" style="left:1104.35px;top:1073.55px;font-size:31px;line-height:31px;color:#3a557c;font-weight:400;letter-spacing:0.667px;-webkit-text-stroke:0.70px #3a557c;">Connection:</div>
<div class="t" style="left:1345.30px;top:1071.35px;font-size:33.6px;line-height:33.6px;color:#3a5a85;font-weight:400;letter-spacing:-0.377px;">priya_azure_dbo</div>
<div class="t" style="left:1105.35px;top:1138.55px;font-size:31px;line-height:31px;color:#3a557c;font-weight:400;letter-spacing:0.169px;-webkit-text-stroke:0.70px #3a557c;">Table Name:</div>
<div class="t" style="left:1297.80px;top:1136.35px;font-size:33.6px;line-height:33.6px;color:#3a5a85;font-weight:400;letter-spacing:-1.631px;">cpk_qa_2701_01</div>
<div class="t" style="left:1891.95px;top:1073.55px;font-size:31px;line-height:31px;color:#3a557c;font-weight:400;letter-spacing:0.667px;-webkit-text-stroke:0.70px #3a557c;">Connection:</div>
<div class="t" style="left:2134.80px;top:1071.35px;font-size:33.6px;line-height:33.6px;color:#3a5a85;font-weight:400;letter-spacing:0.119px;">priya_fabricsql</div>
<div class="t" style="left:1892.95px;top:1138.55px;font-size:31px;line-height:31px;color:#3a557c;font-weight:400;letter-spacing:0.169px;-webkit-text-stroke:0.70px #3a557c;">Table Name:</div>
<div class="t" style="left:2085.40px;top:1136.35px;font-size:33.6px;line-height:33.6px;color:#3a5a85;font-weight:400;letter-spacing:-1.631px;">cpk_qa_2701_01</div>
<div class="t" style="left:2679.35px;top:1073.55px;font-size:31px;line-height:31px;color:#3a557c;font-weight:400;letter-spacing:0.667px;-webkit-text-stroke:0.70px #3a557c;">Connection:</div>
<div class="t" style="left:2922.00px;top:1071.35px;font-size:33.6px;line-height:33.6px;color:#3a5a85;font-weight:400;letter-spacing:-0.107px;">priya_fabricwh_dbo</div>
<div class="t" style="left:2680.35px;top:1138.55px;font-size:31px;line-height:31px;color:#3a557c;font-weight:400;letter-spacing:0.169px;-webkit-text-stroke:0.70px #3a557c;">Table Name:</div>
<div class="t" style="left:2872.80px;top:1136.35px;font-size:33.6px;line-height:33.6px;color:#3a5a85;font-weight:400;letter-spacing:-1.631px;">cpk_qa_2701_01</div>
<div class="t" style="left:544.30px;top:1272.45px;font-size:33.6px;line-height:33.6px;color:#3a5a85;font-weight:400;letter-spacing:-0.821px;">dbo:tpl_pd_qa_2701</div>
<div class="t" style="left:1104.35px;top:1242.25px;font-size:31px;line-height:31px;color:#3a557c;font-weight:400;letter-spacing:0.667px;-webkit-text-stroke:0.70px #3a557c;">Connection:</div>
<div class="t" style="left:1345.30px;top:1240.05px;font-size:33.6px;line-height:33.6px;color:#3a5a85;font-weight:400;letter-spacing:-0.377px;">priya_azure_dbo</div>
<div class="t" style="left:1105.35px;top:1307.25px;font-size:31px;line-height:31px;color:#3a557c;font-weight:400;letter-spacing:0.169px;-webkit-text-stroke:0.70px #3a557c;">Table Name:</div>
<div class="t" style="left:1298.80px;top:1305.05px;font-size:33.6px;line-height:33.6px;color:#3a5a85;font-weight:400;letter-spacing:-1.193px;">tpl_pd_qa_2701</div>
<div class="t" style="left:1891.95px;top:1242.25px;font-size:31px;line-height:31px;color:#3a557c;font-weight:400;letter-spacing:0.667px;-webkit-text-stroke:0.70px #3a557c;">Connection:</div>
<div class="t" style="left:2134.80px;top:1240.05px;font-size:33.6px;line-height:33.6px;color:#3a5a85;font-weight:400;letter-spacing:0.119px;">priya_fabricsql</div>
<div class="t" style="left:1892.95px;top:1307.25px;font-size:31px;line-height:31px;color:#3a557c;font-weight:400;letter-spacing:0.169px;-webkit-text-stroke:0.70px #3a557c;">Table Name:</div>
<div class="t" style="left:2086.40px;top:1305.05px;font-size:33.6px;line-height:33.6px;color:#3a5a85;font-weight:400;letter-spacing:-1.193px;">tpl_pd_qa_2701</div>
<div class="t" style="left:2679.35px;top:1242.25px;font-size:31px;line-height:31px;color:#3a557c;font-weight:400;letter-spacing:0.667px;-webkit-text-stroke:0.70px #3a557c;">Connection:</div>
<div class="t" style="left:2922.00px;top:1240.05px;font-size:33.6px;line-height:33.6px;color:#3a5a85;font-weight:400;letter-spacing:-0.107px;">priya_fabricwh_dbo</div>
<div class="t" style="left:2680.35px;top:1307.25px;font-size:31px;line-height:31px;color:#3a557c;font-weight:400;letter-spacing:0.169px;-webkit-text-stroke:0.70px #3a557c;">Table Name:</div>
<div class="t" style="left:2873.80px;top:1305.05px;font-size:33.6px;line-height:33.6px;color:#3a5a85;font-weight:400;letter-spacing:-1.193px;">tpl_pd_qa_2701</div>
<div class="t" style="left:544.30px;top:1441.15px;font-size:33.6px;line-height:33.6px;color:#3a5a85;font-weight:400;letter-spacing:-0.902px;">dbo:scd_qa_2701</div>
<div class="t" style="left:1104.35px;top:1410.95px;font-size:31px;line-height:31px;color:#3a557c;font-weight:400;letter-spacing:0.667px;-webkit-text-stroke:0.70px #3a557c;">Connection:</div>
<div class="t" style="left:1345.30px;top:1408.75px;font-size:33.6px;line-height:33.6px;color:#3a5a85;font-weight:400;letter-spacing:-0.377px;">priya_azure_dbo</div>
<div class="t" style="left:1105.35px;top:1475.95px;font-size:31px;line-height:31px;color:#3a557c;font-weight:400;letter-spacing:0.169px;-webkit-text-stroke:0.70px #3a557c;">Table Name:</div>
<div class="t" style="left:1298.80px;top:1473.75px;font-size:33.6px;line-height:33.6px;color:#3a5a85;font-weight:400;letter-spacing:-1.387px;">scd_qa_2701</div>
<div class="t" style="left:1891.95px;top:1410.95px;font-size:31px;line-height:31px;color:#3a557c;font-weight:400;letter-spacing:0.667px;-webkit-text-stroke:0.70px #3a557c;">Connection:</div>
<div class="t" style="left:2134.80px;top:1408.75px;font-size:33.6px;line-height:33.6px;color:#3a5a85;font-weight:400;letter-spacing:0.119px;">priya_fabricsql</div>
<div class="t" style="left:1892.95px;top:1475.95px;font-size:31px;line-height:31px;color:#3a557c;font-weight:400;letter-spacing:0.169px;-webkit-text-stroke:0.70px #3a557c;">Table Name:</div>
<div class="t" style="left:2086.40px;top:1473.75px;font-size:33.6px;line-height:33.6px;color:#3a5a85;font-weight:400;letter-spacing:-1.387px;">scd_qa_2701</div>
<div class="t" style="left:2679.35px;top:1410.95px;font-size:31px;line-height:31px;color:#3a557c;font-weight:400;letter-spacing:0.667px;-webkit-text-stroke:0.70px #3a557c;">Connection:</div>
<div class="t" style="left:2922.00px;top:1408.75px;font-size:33.6px;line-height:33.6px;color:#3a5a85;font-weight:400;letter-spacing:-0.107px;">priya_fabricwh_dbo</div>
<div class="t" style="left:2680.35px;top:1475.95px;font-size:31px;line-height:31px;color:#3a557c;font-weight:400;letter-spacing:0.169px;-webkit-text-stroke:0.70px #3a557c;">Table Name:</div>
<div class="t" style="left:2873.80px;top:1473.75px;font-size:33.6px;line-height:33.6px;color:#3a5a85;font-weight:400;letter-spacing:-1.387px;">scd_qa_2701</div>
<div class="t" style="left:101.00px;top:166.06px;font-size:27.8px;line-height:27.8px;color:#0c1b40;font-weight:400;letter-spacing:-0.090px;">EDITable</div>
<div class="t" style="left:91.30px;top:262.11px;font-size:26.8px;line-height:26.8px;color:#2c4a72;font-weight:400;letter-spacing:-0.732px;-webkit-text-stroke:0.60px #2c4a72;">Tables</div>
<div class="t" style="left:91.30px;top:343.31px;font-size:26.8px;line-height:26.8px;color:#2c4a72;font-weight:400;letter-spacing:-0.138px;-webkit-text-stroke:0.60px #2c4a72;">Transaction Logs</div>
<div class="t" style="left:81.10px;top:429.51px;font-size:26.8px;line-height:26.8px;color:#2c4a72;font-weight:400;letter-spacing:0.407px;-webkit-text-stroke:0.60px #2c4a72;">Insights</div>
<div class="t" style="left:130.50px;top:511.92px;font-size:28.2px;line-height:28.2px;color:#4d6a91;font-weight:400;letter-spacing:0.611px;">Metrics</div>
<div class="t" style="left:80.30px;top:600.91px;font-size:26.8px;line-height:26.8px;color:#2c4a72;font-weight:400;letter-spacing:1.200px;-webkit-text-stroke:0.60px #2c4a72;">Utility</div>
<div class="t" style="left:131.70px;top:682.42px;font-size:28.2px;line-height:28.2px;color:#4d6a91;font-weight:400;letter-spacing:0.217px;">Download Report</div>
<div class="t" style="left:134.50px;top:765.39px;font-size:28px;line-height:28px;color:#0b1a3e;font-weight:400;letter-spacing:-0.208px;-webkit-text-stroke:0.60px #0b1a3e;">Pipeline</div>
<div class="t" style="left:102.50px;top:1486.12px;font-size:28.2px;line-height:28.2px;color:#4d6a91;font-weight:400;letter-spacing:0.476px;">(editable-staging)</div>
<div class="t" style="left:162.22px;top:1571.89px;font-size:28px;line-height:28px;color:#13284d;font-weight:400;letter-spacing:-0.002px;-webkit-text-stroke:0.45px #13284d;">Admin Portal</div>
<div class="t" style="left:127.82px;top:1660.99px;font-size:28px;line-height:28px;color:#13284d;font-weight:400;letter-spacing:0.019px;-webkit-text-stroke:0.45px #13284d;">Onboarding Actions</div>
<div class="t" style="left:125.00px;top:1775.47px;font-size:28.5px;line-height:28.5px;color:#13284d;font-weight:400;letter-spacing:0.351px;">My Profile</div>
</div></body></html>
